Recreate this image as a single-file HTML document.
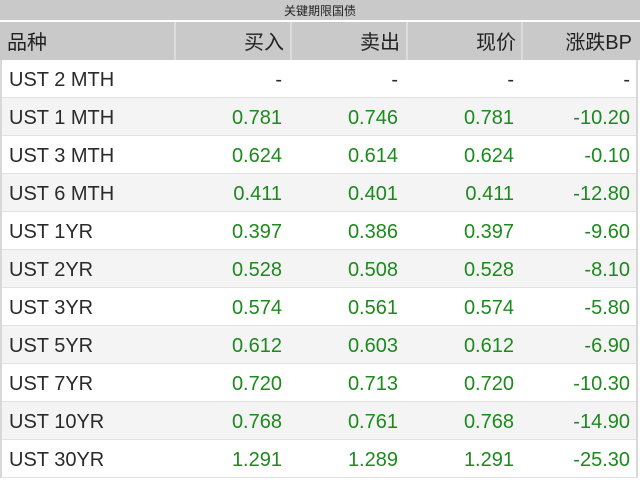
<!DOCTYPE html>
<html><head><meta charset="utf-8"><style>
body{margin:0;width:640px;height:494px;background:#fff;font-family:"Liberation Sans","Noto Sans CJK SC",sans-serif;overflow:hidden;position:relative}
.title{position:absolute;left:0;top:0;width:640px;height:20px;background:#c9c9c9;font-size:12px;line-height:22px;text-align:center;color:#222}
.hdr{position:absolute;left:0;top:22px;width:640px;height:38px;background:#c9c9c9}
.hdr div{position:absolute;top:0;height:38px;line-height:42px;font-size:20px;color:#222}
.vl{position:absolute;top:22px;width:2px;height:38px;background:#dcdcdc}
.row{position:absolute;left:2px;width:634px;height:37px;border-bottom:1px solid #e2e2e2;font-size:20px;line-height:41px;color:#2a2a2a}
.row span{position:absolute;top:0}
.g{color:#1c8a1c}
.c0{left:7px}
.c1{right:354px}.c2{right:238px}.c3{right:122px}.c4{right:6px}
</style></head><body>
<div class="title">关键期限国债</div>
<div class="hdr">
<div style="left:7px">品种</div>
<div style="right:356px">买入</div>
<div style="right:240px">卖出</div>
<div style="right:124px">现价</div>
<div style="right:8px">涨跌BP</div>
</div>
<div class="vl" style="left:174px"></div>
<div class="vl" style="left:290px"></div>
<div class="vl" style="left:406px"></div>
<div class="vl" style="left:521px"></div>
<div style="position:absolute;left:0;top:60px;width:2px;height:418px;background:#d8d8d8"></div>
<div style="position:absolute;left:636px;top:60px;width:2px;height:418px;background:#d8d8d8"></div>
<div class="row" style="top:60px;background:#fff"><span class="c0">UST 2 MTH</span><span class="c1">-</span><span class="c2">-</span><span class="c3">-</span><span class="c4">-</span></div>
<div class="row g" style="top:98px;background:#f4f4f4"><span class="c0" style="color:#2a2a2a">UST 1 MTH</span><span class="c1">0.781</span><span class="c2">0.746</span><span class="c3">0.781</span><span class="c4">-10.20</span></div>
<div class="row g" style="top:136px;background:#fff"><span class="c0" style="color:#2a2a2a">UST 3 MTH</span><span class="c1">0.624</span><span class="c2">0.614</span><span class="c3">0.624</span><span class="c4">-0.10</span></div>
<div class="row g" style="top:174px;background:#f4f4f4"><span class="c0" style="color:#2a2a2a">UST 6 MTH</span><span class="c1">0.411</span><span class="c2">0.401</span><span class="c3">0.411</span><span class="c4">-12.80</span></div>
<div class="row g" style="top:212px;background:#fff"><span class="c0" style="color:#2a2a2a">UST 1YR</span><span class="c1">0.397</span><span class="c2">0.386</span><span class="c3">0.397</span><span class="c4">-9.60</span></div>
<div class="row g" style="top:250px;background:#f4f4f4"><span class="c0" style="color:#2a2a2a">UST 2YR</span><span class="c1">0.528</span><span class="c2">0.508</span><span class="c3">0.528</span><span class="c4">-8.10</span></div>
<div class="row g" style="top:288px;background:#fff"><span class="c0" style="color:#2a2a2a">UST 3YR</span><span class="c1">0.574</span><span class="c2">0.561</span><span class="c3">0.574</span><span class="c4">-5.80</span></div>
<div class="row g" style="top:326px;background:#f4f4f4"><span class="c0" style="color:#2a2a2a">UST 5YR</span><span class="c1">0.612</span><span class="c2">0.603</span><span class="c3">0.612</span><span class="c4">-6.90</span></div>
<div class="row g" style="top:364px;background:#fff"><span class="c0" style="color:#2a2a2a">UST 7YR</span><span class="c1">0.720</span><span class="c2">0.713</span><span class="c3">0.720</span><span class="c4">-10.30</span></div>
<div class="row g" style="top:402px;background:#f4f4f4"><span class="c0" style="color:#2a2a2a">UST 10YR</span><span class="c1">0.768</span><span class="c2">0.761</span><span class="c3">0.768</span><span class="c4">-14.90</span></div>
<div class="row g" style="top:440px;background:#fff"><span class="c0" style="color:#2a2a2a">UST 30YR</span><span class="c1">1.291</span><span class="c2">1.289</span><span class="c3">1.291</span><span class="c4">-25.30</span></div>
</body></html>
